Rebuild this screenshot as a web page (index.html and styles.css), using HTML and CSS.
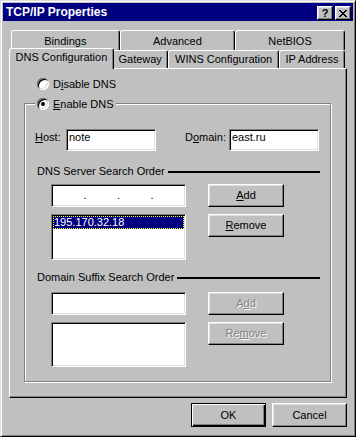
FILE: index.html
```html
<!DOCTYPE html>
<html>
<head>
<meta charset="utf-8">
<link rel="stylesheet" href="styles.css">
</head>
<body>
<div class="window">
  <div class="titlebar">
    <span class="title">TCP/IP Properties</span>
    <div class="tb-btns">
      <span class="tb-btn help">?</span>
      <span class="tb-btn"><svg width="8" height="7" viewBox="0 0 8 7"><path d="M0 0h2v1H0z M6 0h2v1H6z M1 1h2v1H1z M5 1h2v1H5z M2 2h4v1H2z M3 3h2v1H3z M2 4h4v1H2z M1 5h2v1H1z M5 5h2v1H5z M0 6h2v1H0z M6 6h2v1H6z" fill="#000"/></svg></span>
    </div>
  </div>
  <div class="content">
    <div class="tabs back">
      <div class="tab">Bindings</div>
      <div class="tab">Advanced</div>
      <div class="tab">NetBIOS</div>
    </div>
    <div class="tabs front">
      <div class="tab sel">DNS Configuration</div>
      <div class="tab">Gateway</div>
      <div class="tab">WINS Configuration</div>
      <div class="tab">IP Address</div>
    </div>
    <div class="panel">
      <div class="radio-row"><span class="radio"></span><span>D<u>i</u>sable DNS</span></div>
      <div class="group">
        <div class="legend"><span class="radio checked"></span><span><u>E</u>nable DNS</span></div>
        <div class="host-row">
          <span class="lbl host"><u>H</u>ost:</span>
          <div class="edit">note</div>
          <span class="lbl domain">D<u>o</u>main:</span>
          <div class="edit">east.ru</div>
        </div>
        <div class="sec-head first"><span>DNS Server Search Order</span><span class="rule"></span></div>
        <div class="pair ip-row">
          <div class="field ip"><span class="oct"></span><span>.</span><span class="oct"></span><span>.</span><span class="oct"></span><span>.</span><span class="oct"></span></div>
          <button class="btn side"><u>A</u>dd</button>
        </div>
        <div class="pair list-row">
          <div class="listbox"><div class="item">195.170.32.18</div></div>
          <button class="btn side"><u>R</u>emove</button>
        </div>
        <div class="sec-head second"><span>Domain Suffix Search Order</span><span class="rule"></span></div>
        <div class="pair suffix-row">
          <div class="field wide"></div>
          <button class="btn side off" disabled>A<u>d</u>d</button>
        </div>
        <div class="pair suffix-list-row">
          <div class="listbox short"></div>
          <button class="btn side off" disabled>Re<u>m</u>ove</button>
        </div>
      </div>
    </div>
    <div class="actions">
      <button class="btn main default">OK</button>
      <button class="btn main">Cancel</button>
    </div>
  </div>
</div>
</body>
</html>
```

FILE: styles.css
```css
html, body {
  margin: 0;
  padding: 0;
}
body {
  background: #c0c0c0;
  font-family: "Liberation Sans", Arial, sans-serif;
  font-size: 11px;
  color: #000;
}
.window {
  box-sizing: border-box;
  width: 356px;
  height: 437px;
  border: 1px solid;
  border-color: #dfdfdf #000 #000 #dfdfdf;
  box-shadow: inset 1px 1px #fff, inset -1px -1px #808080;
  padding: 2px;
  background: #c0c0c0;
}
.titlebar {
  height: 18px;
  background: #000080;
  color: #fff;
  display: flex;
  align-items: center;
  justify-content: space-between;
  padding: 0 2px 0 3px;
}
.title {
  font-weight: bold;
  font-size: 12px;
  line-height: 18px;
  white-space: nowrap;
}
.tb-btns {
  display: flex;
  gap: 2px;
  margin-top: 2px;
}
.tb-btn {
  box-sizing: border-box;
  width: 16px;
  height: 14px;
  background: #c0c0c0;
  border: 1px solid;
  border-color: #fff #000 #000 #fff;
  box-shadow: inset -1px -1px #808080, inset 1px 1px #dfdfdf;
  display: flex;
  align-items: center;
  justify-content: center;
  color: #000;
  font-weight: bold;
  font-size: 11px;
  line-height: 12px;
}
.tb-btn svg {
  display: block;
}
.content {
  padding: 9px 6px 0 6px;
}
.tabs {
  display: flex;
  margin: 0 2px;
}
.tabs.back {
  height: 20px;
}
.tabs.front {
  height: 18px;
}
.tab {
  flex: 1 1 auto;
  box-sizing: border-box;
  border: 1px solid;
  border-bottom: 0;
  border-color: #fff #000 #000 #fff;
  border-radius: 3px 3px 0 0;
  box-shadow: inset -1px 0 #808080;
  background: #c0c0c0;
  text-align: center;
  line-height: 13px;
  white-space: nowrap;
}
.back .tab {
  padding-top: 4px;
}
.front .tab {
  padding-top: 2px;
}
.tab.sel {
  margin: -2px -2px -1px;
  padding-top: 2px;
  position: relative;
  z-index: 1;
}
.panel {
  box-sizing: border-box;
  height: 330px;
  border: 1px solid;
  border-color: #fff #000 #000 #fff;
  box-shadow: inset -1px -1px #808080;
  padding: 9px 0 0 14px;
}
.radio-row {
  display: flex;
  align-items: center;
  gap: 4px;
  height: 12px;
  line-height: 12px;
  margin-left: 13px;
}
.radio {
  flex: none;
  position: relative;
  width: 12px;
  height: 12px;
  border-radius: 50%;
  background: #fff;
  box-shadow: inset 1px 1px #808080, inset -1px -1px #fff, inset 2px 2px #000, inset -2px -2px #dfdfdf;
}
.radio.checked::after {
  content: "";
  position: absolute;
  left: 4px;
  top: 4px;
  width: 4px;
  height: 4px;
  border-radius: 50%;
  background: #000;
}
.group {
  box-sizing: border-box;
  width: 307px;
  margin-top: 13px;
  border: 1px solid #808080;
  box-shadow: inset 1px 1px #fff, 1px 1px #fff;
  padding-bottom: 14px;
}
.legend {
  display: flex;
  align-items: center;
  gap: 4px;
  width: max-content;
  height: 12px;
  line-height: 12px;
  margin: -6px 0 0 10px;
  padding: 0 2px;
  background: #c0c0c0;
}
.host-row {
  display: flex;
  align-items: flex-start;
  height: 22px;
  margin-top: 19px;
  padding-left: 10px;
}
.lbl {
  padding-top: 2px;
  line-height: 13px;
  white-space: nowrap;
}
.lbl.host {
  width: 31px;
}
.lbl.domain {
  width: 44px;
  margin-left: 29px;
}
.edit, .field, .listbox {
  box-sizing: border-box;
  background: #fff;
  border: 1px solid;
  border-color: #808080 #fff #fff #808080;
  box-shadow: inset 1px 1px #000, inset -1px -1px #dfdfdf;
}
.edit {
  width: 90px;
  height: 22px;
  padding: 1px 0 0 2px;
  line-height: 13px;
}
.sec-head {
  display: flex;
  align-items: center;
  height: 13px;
  line-height: 13px;
  margin: 14px 10px 0 12px;
  white-space: nowrap;
}
.sec-head.second {
  margin-top: 11px;
}
.rule {
  flex: 1;
  height: 2px;
  background: #000;
  margin-left: 3px;
}
.pair {
  display: flex;
  align-items: flex-start;
  gap: 22px;
  margin-left: 26px;
}
.ip-row {
  margin-top: 6px;
}
.list-row {
  margin-top: 7px;
}
.suffix-row {
  margin-top: 8px;
}
.suffix-list-row {
  margin-top: 7px;
}
.field {
  width: 135px;
  height: 23px;
}
.ip {
  display: flex;
  align-items: center;
  padding: 0 1px;
  line-height: 13px;
}
.oct {
  flex: 1;
}
.listbox {
  width: 135px;
  height: 46px;
  padding: 1px;
}
.listbox.short {
  height: 45px;
}
.item {
  height: 13px;
  line-height: 13px;
  background: #000080;
  color: #fff;
  padding-left: 1px;
  outline: 1px dotted #ff0;
  outline-offset: -1px;
}
.btn {
  box-sizing: border-box;
  width: 76px;
  height: 23px;
  margin: 0;
  padding: 0;
  background: #c0c0c0;
  border: 1px solid;
  border-color: #fff #000 #000 #fff;
  border-radius: 0;
  box-shadow: inset -1px -1px #808080, inset 1px 1px #dfdfdf;
  font: inherit;
  line-height: 13px;
  color: #000;
  flex: none;
}
.btn.off {
  color: #808080;
  text-shadow: 1px 1px #fff;
}
.actions {
  display: flex;
  justify-content: flex-end;
  gap: 6px;
  margin-top: 5px;
}
.btn.main {
  width: 75px;
  height: 24px;
}
.btn.default {
  border-color: #000;
  box-shadow: inset 1px 1px #fff, inset -1px -1px #000, inset -2px -2px #808080;
}
```
